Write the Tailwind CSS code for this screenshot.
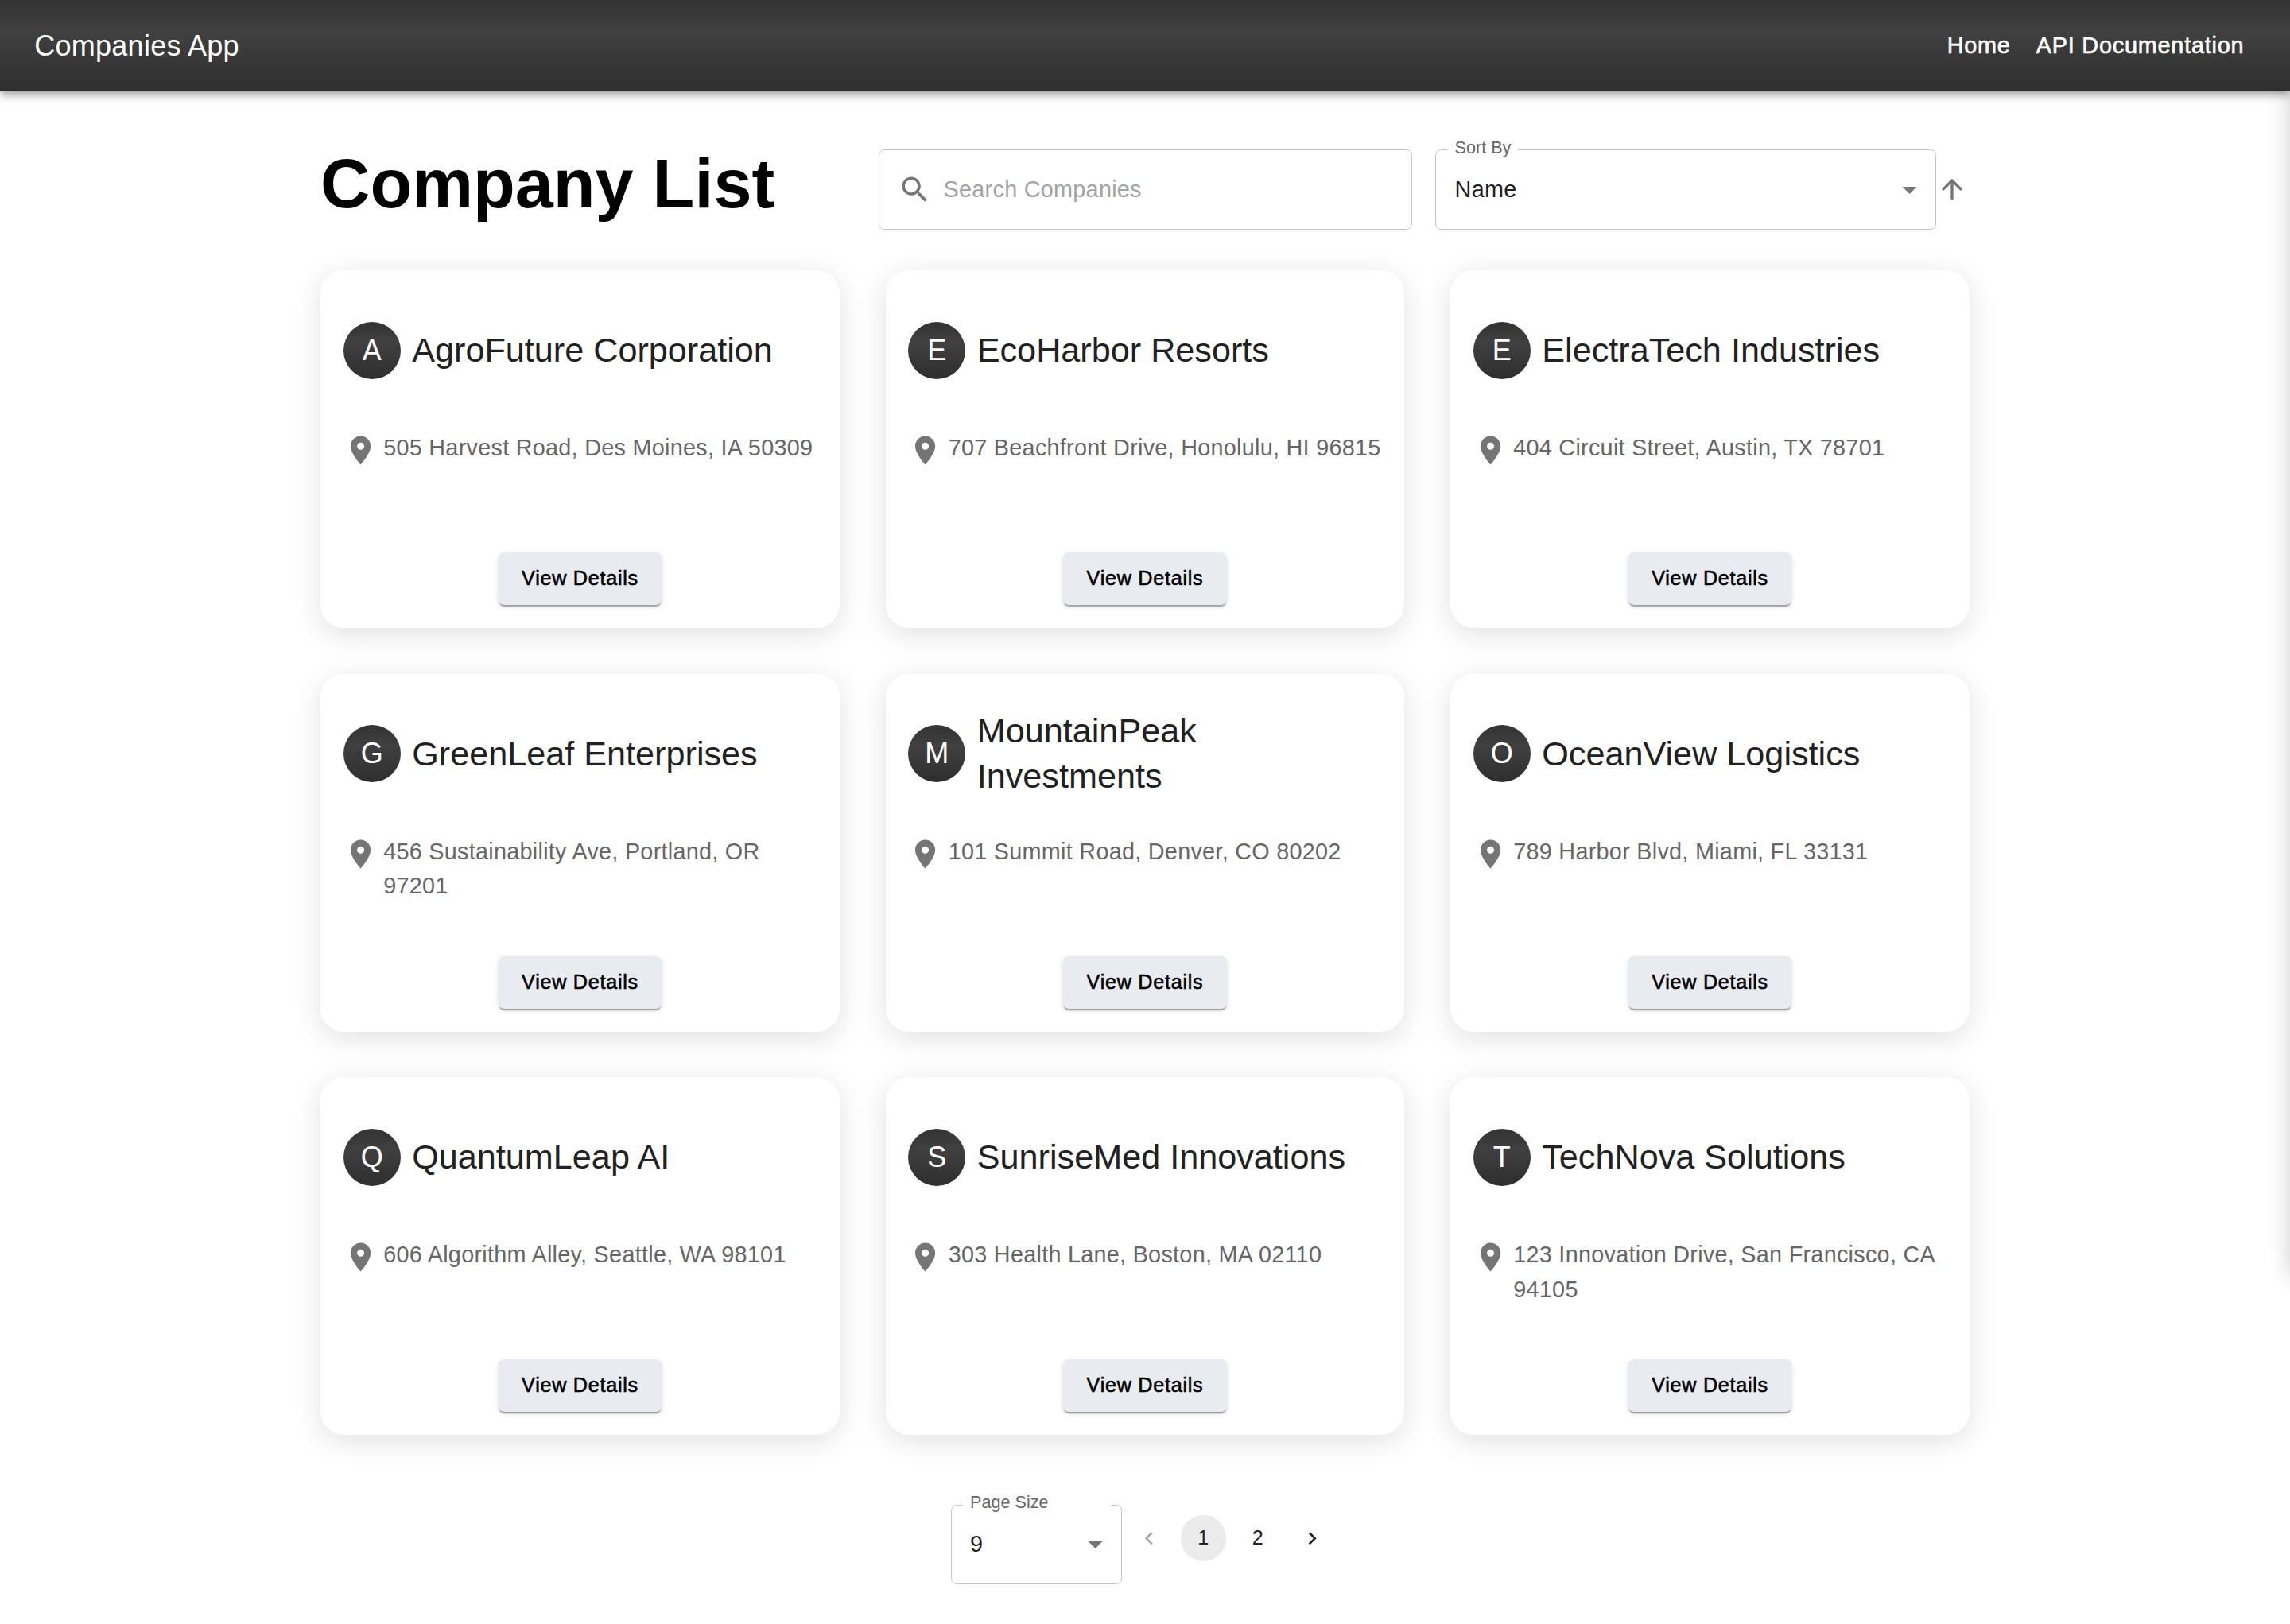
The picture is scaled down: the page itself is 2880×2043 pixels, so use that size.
<!DOCTYPE html>
<html lang="en">
<head>
<meta charset="UTF-8" />
<title>Companies App</title>
<script src="https://cdn.jsdelivr.net/npm/@tailwindcss/browser@4"></script>
</head>
<body class="relative h-[2043px] overflow-hidden bg-white font-['Liberation_Sans',Arial,sans-serif]">
<!-- closed drawer, only its shadow leaks in at the right edge -->
<div class="absolute right-0 top-0 h-[1625px] w-[60px] overflow-hidden">
    <div class="absolute left-[60px] top-[-40px] h-[1645px] w-[40px] bg-white shadow-[0_0_29px_rgba(0,0,0,0.2)]"></div>
</div>
<header class="relative z-10 flex h-[115.2px] items-center justify-between bg-[linear-gradient(180deg,#333333_0%,#404040_35%,#2e2e2e_100%)] pl-[43.2px] pr-[57.6px] text-white shadow-[0_3.6px_7.2px_-1.8px_rgba(0,0,0,0.2),0_7.2px_9px_rgba(0,0,0,0.14),0_1.8px_18px_rgba(0,0,0,0.12)]">
    <div class="text-[36px] tracking-[0.27px]">Companies App</div>
    <nav class="-mt-[1px] flex gap-[32px] text-[28.8px] tracking-[0.8px] [-webkit-text-stroke:0.6px_white]">
        <a href="#">Home</a>
        <a href="#">API Documentation</a>
    </nav>
</header>
<main class="relative mx-auto w-[2074px]">
    <div class="flex items-center gap-[28.8px] pt-[72.8px]">
        <h1 class="-mt-[14px] w-[673.2px] shrink-0 text-[86.4px] leading-[100.8px] font-bold text-black">Company List</h1>
        <div class="flex h-[100.8px] w-[671.4px] shrink-0 items-center rounded-[7.2px] border-[1.8px] border-[#c4c4c4] pl-[23px]">
            <svg class="h-[43.2px] w-[43.2px] fill-[#757575]" viewBox="0 0 24 24"><path d="M15.5 14h-.79l-.28-.27C15.41 12.59 16 11.11 16 9.5 16 5.91 13.09 3 9.5 3S3 5.91 3 9.5 5.91 16 9.5 16c1.61 0 3.09-.59 4.23-1.57l.27.28v.79l5 4.99L20.49 19l-4.99-5zm-6 0C7.01 14 5 11.99 5 9.5S7.01 5 9.5 5 14 7.01 14 9.5 11.99 14 9.5 14z"/></svg>
            <span class="ml-[14.4px] text-[28.8px] tracking-[0.27px] text-[#a3a3a3]">Search Companies</span>
        </div>
        <div class="flex shrink-0 items-center">
            <div class="relative flex h-[100.8px] w-[630px] items-center justify-between rounded-[7.2px] border-[1.8px] border-[#c4c4c4] pl-[23.4px] pr-[11px]">
                <span class="absolute left-[14.4px] top-[-16px] bg-white px-[9px] text-[21.6px] leading-[25px] text-[#666666]">Sort By</span>
                <span class="text-[28.8px] tracking-[0.27px] text-[#1f1f1f]">Name</span>
                <svg class="h-[43.2px] w-[43.2px] fill-[#757575]" viewBox="0 0 24 24"><path d="M7 10l5 5 5-5z"/></svg>
            </div>
            <svg class="h-[40px] w-[40px] fill-[#757575]" viewBox="0 0 24 24"><path d="M13 19V7.83l4.88 4.88c.39.39 1.03.39 1.42 0 .39-.39.39-1.02 0-1.41l-6.59-6.59a.9959.9959 0 0 0-1.41 0l-6.6 6.58c-.39.39-.39 1.02 0 1.41.39.39 1.02.39 1.41 0L11 7.83V19c0 .55.45 1 1 1s1-.45 1-1z"/></svg>
        </div>
    </div>

    <div class="mt-[51.2px] grid grid-cols-3 gap-[57.6px]">
        <div class="flex h-[450px] flex-col rounded-[28.8px] bg-white p-[28.8px] shadow-[0_7.2px_36px_rgba(0,0,0,0.12)]">
            <div class="flex min-h-[144px] items-center gap-[14.4px]">
                <div class="flex h-[72px] w-[72px] shrink-0 items-center justify-center rounded-full bg-[linear-gradient(180deg,#333333_0%,#404040_35%,#2e2e2e_100%)] text-[36px] text-white">A</div>
                <h2 class="text-[43.2px] leading-[57.6px] text-[#212121]">AgroFuture Corporation</h2>
            </div>
            <div class="mt-[29.5px] flex gap-[7.2px]">
                <svg class="mt-[3px] h-[43.2px] w-[43.2px] shrink-0 fill-[#757575]" viewBox="0 0 24 24"><path d="M12 2C8.13 2 5 5.13 5 9c0 5.25 7 13 7 13s7-7.75 7-13c0-3.87-3.13-7-7-7zm0 9.5c-1.38 0-2.5-1.12-2.5-2.5s1.12-2.5 2.5-2.5 2.5 1.12 2.5 2.5-1.12 2.5-2.5 2.5z"/></svg>
                <p class="text-[28.8px] leading-[43.2px] tracking-[0.27px] text-[#666666]">505 Harvest Road, Des Moines, IA 50309</p>
            </div>
            <button class="mx-auto mt-auto h-[66px] rounded-[7.2px] bg-[#e8ebf0] px-[29.5px] text-[25.2px] tracking-[0.72px] text-black [-webkit-text-stroke:0.6px_black] shadow-[0_3px_2px_-1px_rgba(0,0,0,0.35),0_2px_7px_rgba(0,0,0,0.12)]">View Details</button>
        </div>
        <div class="flex h-[450px] flex-col rounded-[28.8px] bg-white p-[28.8px] shadow-[0_7.2px_36px_rgba(0,0,0,0.12)]">
            <div class="flex min-h-[144px] items-center gap-[14.4px]">
                <div class="flex h-[72px] w-[72px] shrink-0 items-center justify-center rounded-full bg-[linear-gradient(180deg,#333333_0%,#404040_35%,#2e2e2e_100%)] text-[36px] text-white">E</div>
                <h2 class="text-[43.2px] leading-[57.6px] text-[#212121]">EcoHarbor Resorts</h2>
            </div>
            <div class="mt-[29.5px] flex gap-[7.2px]">
                <svg class="mt-[3px] h-[43.2px] w-[43.2px] shrink-0 fill-[#757575]" viewBox="0 0 24 24"><path d="M12 2C8.13 2 5 5.13 5 9c0 5.25 7 13 7 13s7-7.75 7-13c0-3.87-3.13-7-7-7zm0 9.5c-1.38 0-2.5-1.12-2.5-2.5s1.12-2.5 2.5-2.5 2.5 1.12 2.5 2.5-1.12 2.5-2.5 2.5z"/></svg>
                <p class="text-[28.8px] leading-[43.2px] tracking-[0.27px] text-[#666666]">707 Beachfront Drive, Honolulu, HI 96815</p>
            </div>
            <button class="mx-auto mt-auto h-[66px] rounded-[7.2px] bg-[#e8ebf0] px-[29.5px] text-[25.2px] tracking-[0.72px] text-black [-webkit-text-stroke:0.6px_black] shadow-[0_3px_2px_-1px_rgba(0,0,0,0.35),0_2px_7px_rgba(0,0,0,0.12)]">View Details</button>
        </div>
        <div class="flex h-[450px] flex-col rounded-[28.8px] bg-white p-[28.8px] shadow-[0_7.2px_36px_rgba(0,0,0,0.12)]">
            <div class="flex min-h-[144px] items-center gap-[14.4px]">
                <div class="flex h-[72px] w-[72px] shrink-0 items-center justify-center rounded-full bg-[linear-gradient(180deg,#333333_0%,#404040_35%,#2e2e2e_100%)] text-[36px] text-white">E</div>
                <h2 class="text-[43.2px] leading-[57.6px] text-[#212121]">ElectraTech Industries</h2>
            </div>
            <div class="mt-[29.5px] flex gap-[7.2px]">
                <svg class="mt-[3px] h-[43.2px] w-[43.2px] shrink-0 fill-[#757575]" viewBox="0 0 24 24"><path d="M12 2C8.13 2 5 5.13 5 9c0 5.25 7 13 7 13s7-7.75 7-13c0-3.87-3.13-7-7-7zm0 9.5c-1.38 0-2.5-1.12-2.5-2.5s1.12-2.5 2.5-2.5 2.5 1.12 2.5 2.5-1.12 2.5-2.5 2.5z"/></svg>
                <p class="text-[28.8px] leading-[43.2px] tracking-[0.27px] text-[#666666]">404 Circuit Street, Austin, TX 78701</p>
            </div>
            <button class="mx-auto mt-auto h-[66px] rounded-[7.2px] bg-[#e8ebf0] px-[29.5px] text-[25.2px] tracking-[0.72px] text-black [-webkit-text-stroke:0.6px_black] shadow-[0_3px_2px_-1px_rgba(0,0,0,0.35),0_2px_7px_rgba(0,0,0,0.12)]">View Details</button>
        </div>
        <div class="flex h-[450px] flex-col rounded-[28.8px] bg-white p-[28.8px] shadow-[0_7.2px_36px_rgba(0,0,0,0.12)]">
            <div class="flex min-h-[144px] items-center gap-[14.4px]">
                <div class="flex h-[72px] w-[72px] shrink-0 items-center justify-center rounded-full bg-[linear-gradient(180deg,#333333_0%,#404040_35%,#2e2e2e_100%)] text-[36px] text-white">G</div>
                <h2 class="text-[43.2px] leading-[57.6px] text-[#212121]">GreenLeaf Enterprises</h2>
            </div>
            <div class="mt-[29.5px] flex gap-[7.2px]">
                <svg class="mt-[3px] h-[43.2px] w-[43.2px] shrink-0 fill-[#757575]" viewBox="0 0 24 24"><path d="M12 2C8.13 2 5 5.13 5 9c0 5.25 7 13 7 13s7-7.75 7-13c0-3.87-3.13-7-7-7zm0 9.5c-1.38 0-2.5-1.12-2.5-2.5s1.12-2.5 2.5-2.5 2.5 1.12 2.5 2.5-1.12 2.5-2.5 2.5z"/></svg>
                <p class="text-[28.8px] leading-[43.2px] tracking-[0.27px] text-[#666666]">456 Sustainability Ave, Portland, OR 97201</p>
            </div>
            <button class="mx-auto mt-auto h-[66px] rounded-[7.2px] bg-[#e8ebf0] px-[29.5px] text-[25.2px] tracking-[0.72px] text-black [-webkit-text-stroke:0.6px_black] shadow-[0_3px_2px_-1px_rgba(0,0,0,0.35),0_2px_7px_rgba(0,0,0,0.12)]">View Details</button>
        </div>
        <div class="flex h-[450px] flex-col rounded-[28.8px] bg-white p-[28.8px] shadow-[0_7.2px_36px_rgba(0,0,0,0.12)]">
            <div class="flex min-h-[144px] items-center gap-[14.4px]">
                <div class="flex h-[72px] w-[72px] shrink-0 items-center justify-center rounded-full bg-[linear-gradient(180deg,#333333_0%,#404040_35%,#2e2e2e_100%)] text-[36px] text-white">M</div>
                <h2 class="text-[43.2px] leading-[57.6px] text-[#212121]">MountainPeak Investments</h2>
            </div>
            <div class="mt-[29.5px] flex gap-[7.2px]">
                <svg class="mt-[3px] h-[43.2px] w-[43.2px] shrink-0 fill-[#757575]" viewBox="0 0 24 24"><path d="M12 2C8.13 2 5 5.13 5 9c0 5.25 7 13 7 13s7-7.75 7-13c0-3.87-3.13-7-7-7zm0 9.5c-1.38 0-2.5-1.12-2.5-2.5s1.12-2.5 2.5-2.5 2.5 1.12 2.5 2.5-1.12 2.5-2.5 2.5z"/></svg>
                <p class="text-[28.8px] leading-[43.2px] tracking-[0.27px] text-[#666666]">101 Summit Road, Denver, CO 80202</p>
            </div>
            <button class="mx-auto mt-auto h-[66px] rounded-[7.2px] bg-[#e8ebf0] px-[29.5px] text-[25.2px] tracking-[0.72px] text-black [-webkit-text-stroke:0.6px_black] shadow-[0_3px_2px_-1px_rgba(0,0,0,0.35),0_2px_7px_rgba(0,0,0,0.12)]">View Details</button>
        </div>
        <div class="flex h-[450px] flex-col rounded-[28.8px] bg-white p-[28.8px] shadow-[0_7.2px_36px_rgba(0,0,0,0.12)]">
            <div class="flex min-h-[144px] items-center gap-[14.4px]">
                <div class="flex h-[72px] w-[72px] shrink-0 items-center justify-center rounded-full bg-[linear-gradient(180deg,#333333_0%,#404040_35%,#2e2e2e_100%)] text-[36px] text-white">O</div>
                <h2 class="text-[43.2px] leading-[57.6px] text-[#212121]">OceanView Logistics</h2>
            </div>
            <div class="mt-[29.5px] flex gap-[7.2px]">
                <svg class="mt-[3px] h-[43.2px] w-[43.2px] shrink-0 fill-[#757575]" viewBox="0 0 24 24"><path d="M12 2C8.13 2 5 5.13 5 9c0 5.25 7 13 7 13s7-7.75 7-13c0-3.87-3.13-7-7-7zm0 9.5c-1.38 0-2.5-1.12-2.5-2.5s1.12-2.5 2.5-2.5 2.5 1.12 2.5 2.5-1.12 2.5-2.5 2.5z"/></svg>
                <p class="text-[28.8px] leading-[43.2px] tracking-[0.27px] text-[#666666]">789 Harbor Blvd, Miami, FL 33131</p>
            </div>
            <button class="mx-auto mt-auto h-[66px] rounded-[7.2px] bg-[#e8ebf0] px-[29.5px] text-[25.2px] tracking-[0.72px] text-black [-webkit-text-stroke:0.6px_black] shadow-[0_3px_2px_-1px_rgba(0,0,0,0.35),0_2px_7px_rgba(0,0,0,0.12)]">View Details</button>
        </div>
        <div class="flex h-[450px] flex-col rounded-[28.8px] bg-white p-[28.8px] shadow-[0_7.2px_36px_rgba(0,0,0,0.12)]">
            <div class="flex min-h-[144px] items-center gap-[14.4px]">
                <div class="flex h-[72px] w-[72px] shrink-0 items-center justify-center rounded-full bg-[linear-gradient(180deg,#333333_0%,#404040_35%,#2e2e2e_100%)] text-[36px] text-white">Q</div>
                <h2 class="text-[43.2px] leading-[57.6px] text-[#212121]">QuantumLeap AI</h2>
            </div>
            <div class="mt-[29.5px] flex gap-[7.2px]">
                <svg class="mt-[3px] h-[43.2px] w-[43.2px] shrink-0 fill-[#757575]" viewBox="0 0 24 24"><path d="M12 2C8.13 2 5 5.13 5 9c0 5.25 7 13 7 13s7-7.75 7-13c0-3.87-3.13-7-7-7zm0 9.5c-1.38 0-2.5-1.12-2.5-2.5s1.12-2.5 2.5-2.5 2.5 1.12 2.5 2.5-1.12 2.5-2.5 2.5z"/></svg>
                <p class="text-[28.8px] leading-[43.2px] tracking-[0.27px] text-[#666666]">606 Algorithm Alley, Seattle, WA 98101</p>
            </div>
            <button class="mx-auto mt-auto h-[66px] rounded-[7.2px] bg-[#e8ebf0] px-[29.5px] text-[25.2px] tracking-[0.72px] text-black [-webkit-text-stroke:0.6px_black] shadow-[0_3px_2px_-1px_rgba(0,0,0,0.35),0_2px_7px_rgba(0,0,0,0.12)]">View Details</button>
        </div>
        <div class="flex h-[450px] flex-col rounded-[28.8px] bg-white p-[28.8px] shadow-[0_7.2px_36px_rgba(0,0,0,0.12)]">
            <div class="flex min-h-[144px] items-center gap-[14.4px]">
                <div class="flex h-[72px] w-[72px] shrink-0 items-center justify-center rounded-full bg-[linear-gradient(180deg,#333333_0%,#404040_35%,#2e2e2e_100%)] text-[36px] text-white">S</div>
                <h2 class="text-[43.2px] leading-[57.6px] text-[#212121]">SunriseMed Innovations</h2>
            </div>
            <div class="mt-[29.5px] flex gap-[7.2px]">
                <svg class="mt-[3px] h-[43.2px] w-[43.2px] shrink-0 fill-[#757575]" viewBox="0 0 24 24"><path d="M12 2C8.13 2 5 5.13 5 9c0 5.25 7 13 7 13s7-7.75 7-13c0-3.87-3.13-7-7-7zm0 9.5c-1.38 0-2.5-1.12-2.5-2.5s1.12-2.5 2.5-2.5 2.5 1.12 2.5 2.5-1.12 2.5-2.5 2.5z"/></svg>
                <p class="text-[28.8px] leading-[43.2px] tracking-[0.27px] text-[#666666]">303 Health Lane, Boston, MA 02110</p>
            </div>
            <button class="mx-auto mt-auto h-[66px] rounded-[7.2px] bg-[#e8ebf0] px-[29.5px] text-[25.2px] tracking-[0.72px] text-black [-webkit-text-stroke:0.6px_black] shadow-[0_3px_2px_-1px_rgba(0,0,0,0.35),0_2px_7px_rgba(0,0,0,0.12)]">View Details</button>
        </div>
        <div class="flex h-[450px] flex-col rounded-[28.8px] bg-white p-[28.8px] shadow-[0_7.2px_36px_rgba(0,0,0,0.12)]">
            <div class="flex min-h-[144px] items-center gap-[14.4px]">
                <div class="flex h-[72px] w-[72px] shrink-0 items-center justify-center rounded-full bg-[linear-gradient(180deg,#333333_0%,#404040_35%,#2e2e2e_100%)] text-[36px] text-white">T</div>
                <h2 class="text-[43.2px] leading-[57.6px] text-[#212121]">TechNova Solutions</h2>
            </div>
            <div class="mt-[29.5px] flex gap-[7.2px]">
                <svg class="mt-[3px] h-[43.2px] w-[43.2px] shrink-0 fill-[#757575]" viewBox="0 0 24 24"><path d="M12 2C8.13 2 5 5.13 5 9c0 5.25 7 13 7 13s7-7.75 7-13c0-3.87-3.13-7-7-7zm0 9.5c-1.38 0-2.5-1.12-2.5-2.5s1.12-2.5 2.5-2.5 2.5 1.12 2.5 2.5-1.12 2.5-2.5 2.5z"/></svg>
                <p class="text-[28.8px] leading-[43.2px] tracking-[0.27px] text-[#666666]">123 Innovation Drive, San Francisco, CA 94105</p>
            </div>
            <button class="mx-auto mt-auto h-[66px] rounded-[7.2px] bg-[#e8ebf0] px-[29.5px] text-[25.2px] tracking-[0.72px] text-black [-webkit-text-stroke:0.6px_black] shadow-[0_3px_2px_-1px_rgba(0,0,0,0.35),0_2px_7px_rgba(0,0,0,0.12)]">View Details</button>
        </div>
    </div>

    <div class="mt-[87.4px] flex items-start justify-center">
        <div class="relative flex h-[100.8px] w-[215px] items-center justify-between rounded-[7.2px] border-[1.8px] border-[#c4c4c4] pl-[23.4px] pr-[11px]">
            <span class="absolute left-[14.4px] top-[-17px] w-[186px] bg-white px-[9px] text-[21.6px] leading-[25px] text-[#666666]">Page Size</span>
            <span class="text-[28.8px] tracking-[0.27px] text-[#1f1f1f]">9</span>
            <svg class="h-[43.2px] w-[43.2px] fill-[#757575]" viewBox="0 0 24 24"><path d="M7 10l5 5 5-5z"/></svg>
        </div>
        <nav class="mt-[13.8px] flex items-center gap-[10.8px] px-[5.4px] text-[25.2px] text-[#212121]">
            <button class="flex h-[57.6px] w-[57.6px] items-center justify-center rounded-full opacity-40">
                <svg class="h-[32.4px] w-[32.4px] fill-[#212121]" viewBox="0 0 24 24"><path d="M15.41 7.41 14 6l-6 6 6 6 1.41-1.41L10.83 12z"/></svg>
            </button>
            <button class="h-[57.6px] w-[57.6px] rounded-full bg-[#ebebeb]">1</button>
            <button class="h-[57.6px] w-[57.6px] rounded-full">2</button>
            <button class="flex h-[57.6px] w-[57.6px] items-center justify-center rounded-full">
                <svg class="h-[32.4px] w-[32.4px] fill-[#212121]" viewBox="0 0 24 24"><path d="M10 6 8.59 7.41 13.17 12l-4.58 4.59L10 18l6-6z"/></svg>
            </button>
        </nav>
    </div>
</main>
</body>
</html>
